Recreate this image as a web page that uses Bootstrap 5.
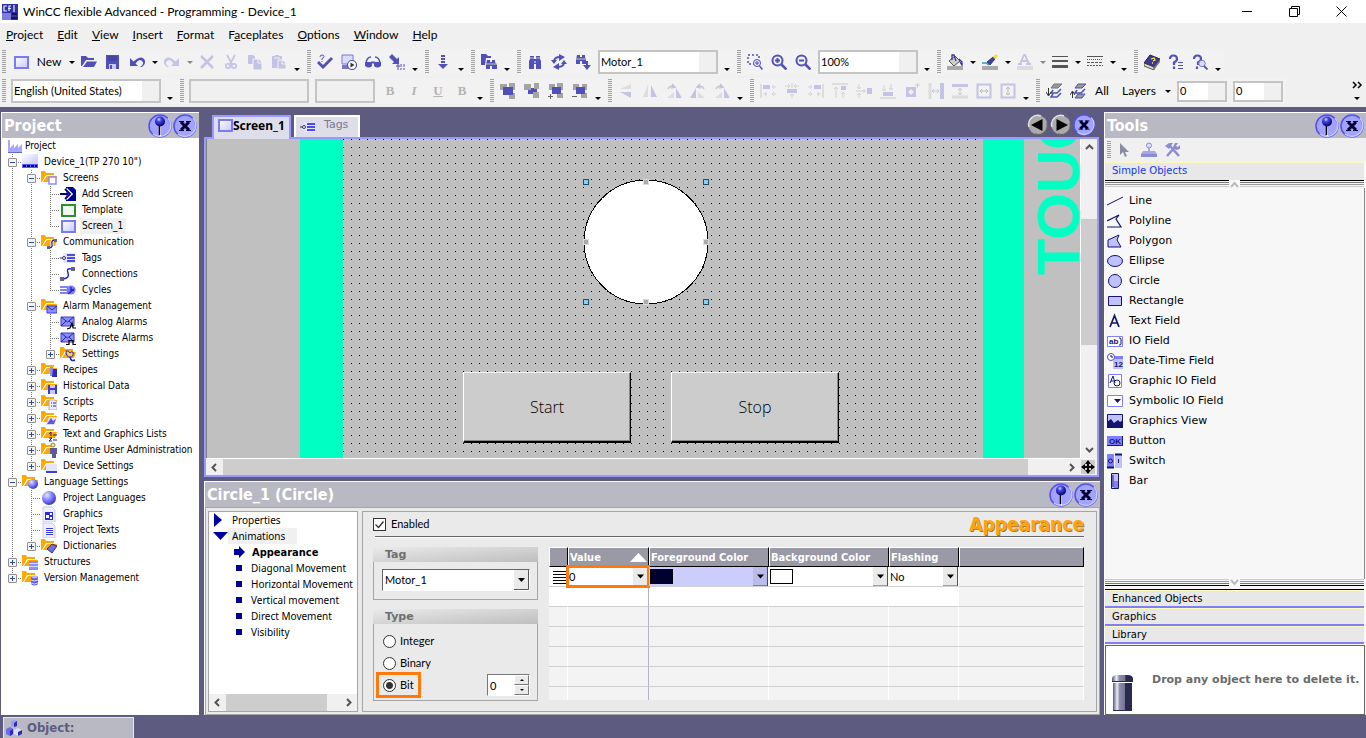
<!DOCTYPE html>
<html lang="en">
<head>
<meta charset="utf-8">
<meta name="viewport" content="width=device-width, initial-scale=1">
<title>WinCC flexible Advanced - Programming - Device_1</title>
<link href="https://cdn.jsdelivr.net/npm/bootstrap@5.3.0/dist/css/bootstrap.min.css" rel="stylesheet">
<style>
:root{--frame:#9999ff;--shell:#5d5c80}
body{font:12px/16px Lato,"Noto Sans",sans-serif;color:#000;background:var(--shell)}
button,select,input{font:inherit;color:inherit}
button{background:none;border:0;padding:0}
svg{display:block;flex:none}
a{color:inherit;text-decoration:none}
.i16{width:16px;height:16px}
/* window chrome */
.titlebar{height:23px;background:#fff}
.titlebar button{width:46px;height:23px;margin-right:1px}
.titlebar button:last-child{margin-right:2px}
.menubar{height:24px;background:#f0f0f0;gap:14px;padding-left:6px}
.toolbars{background:#f0f0f0;height:60px;padding-top:1px}
.toolrow{height:28px;margin-bottom:1px}
.toolset{height:26px;background:#f2f2f2}
.grip{width:10px;height:24px;background:repeating-linear-gradient(#a0a0a0 0 1px,transparent 1px 2px) 4px 0/4px 100% no-repeat}
.grip.edge{width:8px;background-position:2px 0}
.tb{width:24px;height:24px;display:flex;align-items:center;justify-content:center}
.tb.txt{width:auto}
.dd{width:11px;height:24px;display:flex;align-items:center;justify-content:center}
.ovf{width:12px;height:24px;display:flex;align-items:end;justify-content:center;padding-bottom:3px}
.dd::before,.ovf::before{content:"";border:3px solid transparent;border-top-color:#000;border-bottom:0}
.dd.off::before{border-top-color:#888}
.tsel{appearance:none;height:24px;margin:0 3px;border:2px solid #c4c4c4;border-radius:0;padding:0 1px;font-size:11px;background:linear-gradient(90deg,#fff calc(100% - 17px),#f0f0f0 0)}
.tsel:disabled{background:#f0f0f0;opacity:1}
.w120{width:120px}.w100{width:100px}.w150{width:150px}.w60{width:60px}.w50{width:50px;height:21px}
.fmt{font:bold 13px "Liberation Serif",serif;color:#b4b4b4}
/* docked panels */
.pane{border-top:1px solid #fff;border-left:1px solid #fff;min-height:0}
.pane-head{height:25px;background:#b9b9c3;color:#fff;font:bold 16px/25px "DejaVu Sans Condensed","DejaVu Sans",sans-serif;padding:0 2px;gap:1px}
.i24{width:24px;height:24px}
.left{width:198px;background:#fff;margin-left:1px}
.mid{margin:0 4px 0 5px;min-width:0}
.right{width:262px;background:#f7f7f7}
/* project tree */
.tree{font:10px/16px "DejaVu Sans Condensed","DejaVu Sans",sans-serif}
.tree ul,.tree{list-style:none;margin:0;padding:0}
.tree .rowline{display:flex;height:16px;padding-left:1px;white-space:nowrap}
.tree .lbl{padding:0 3px 0 2px;margin-left:4px}
.tree .lbl.on{background:#f0f0f0}
.c{width:19px;flex:none;display:flex;align-items:center;justify-content:center;
 --v:repeating-linear-gradient(#777 0 1px,transparent 1px 2px) 9px 0/1px 100% no-repeat;
 --h:repeating-linear-gradient(90deg,#777 0 1px,transparent 1px 2px) 9px 8px/10px 1px no-repeat}
.c.v{background:var(--v)}
.c.t{background:var(--v),var(--h)}
.c.e{background:repeating-linear-gradient(#777 0 1px,transparent 1px 2px) 9px 0/1px 8px no-repeat,var(--h)}
.c button{width:9px;height:9px;border:1px solid #909090;border-radius:1px;background:linear-gradient(#2c4a9c,#2c4a9c) 1px 3px/5px 1px no-repeat,#f4f4f4}
.c button.p{background:linear-gradient(#2c4a9c,#2c4a9c) 1px 3px/5px 1px no-repeat,linear-gradient(#2c4a9c,#2c4a9c) 3px 1px/1px 5px no-repeat,#f4f4f4}
/* screen editor */
.tabs{height:25px;padding-left:8px;padding-right:5px}
.tabs .tab{height:22px;border:2px solid #fff;border-bottom:0;background:#dedeea;color:#77778a;display:flex}
.tabs .tab.on{width:79px;height:24px;margin-bottom:-2px;border-color:var(--frame);color:#000;font:bold 12px/18px "Noto Sans",sans-serif;position:relative;padding-left:3px}
.tabs .tab.idle{width:66px;margin-left:3px;padding-left:4px;gap:8px;font:11px/16px "DejaVu Sans",sans-serif}
.editor{border:2px solid var(--frame);min-height:0;background:#f0f0f0;margin-right:1px}
.stage{position:relative;overflow:hidden;background:#c0c0c0;border-left:1px solid #808080;min-width:0}
.stage>*{position:absolute}
.strip{top:0;bottom:0;background:#00ffc3}
.touch{font:bold 60px/60px "Liberation Sans",sans-serif;color:#00ffc3;writing-mode:vertical-rl;transform:rotate(180deg)}
.hmi{width:168px;height:71px;background:#ccc;border:1px solid #fff;border-right-color:#000;border-bottom:2px solid #000;box-shadow:inset -1px -1px #888;font:300 16px "Open Sans","Noto Sans",sans-serif}
.knob{width:6px;height:6px;background:#aaa;border:1px solid #ddd}
.knob.k{background:#87cefa;border-color:#205060}
.vbar{width:17px;border-left:1px solid #fff}
.thumb{background:#cdcdcd}
.chev{width:9px;height:9px;fill:none;stroke:#555;stroke-width:2}
/* property view */
.props{height:234px;margin-top:4px;background:#eaeaea}
.prop-body{min-height:0;padding:3px 2px 2px 2px;gap:4px}
.boxed{border:1px solid #a5a5a5}
.nav-tree{width:150px;background:#fff;font:10px/16px "Noto Sans",sans-serif}
.nav-tree a{display:flex;height:16px;align-items:center;white-space:nowrap}
.bul{width:6px;height:6px;background:#000090;margin:0 9px 0 27px}
.form{font-size:11px}
.heading{font:bold 19px/22px "DejaVu Sans Condensed","DejaVu Sans",sans-serif;color:#ffa50a;text-shadow:1px 1px #8a7a50}
.rule{border-top:1px solid #666;border-bottom:1px solid #fff}
.group{width:165px;border:1px solid #a5a5a5;border-top:0}
.group legend{float:none;margin:0 -1px;width:165px;height:15px;font:bold 11px/15px "DejaVu Sans",sans-serif;color:#6e6e6e;padding-left:12px;background:linear-gradient(#eaeaea66,#b4b4b466),linear-gradient(90deg,#eaeaea,#c4c4c4)}
.pick{appearance:none;border:1px solid #666;border-right-color:#fff;border-bottom-color:#fff;border-radius:0;background:url("data:image/svg+xml,%3Csvg xmlns='http://www.w3.org/2000/svg' width='15' height='20'%3E%3Cpath d='M0 0h15v20H0z' fill='%23eaeaea'/%3E%3Cpath d='M14.500 0v19.500H0' fill='none' stroke='%23555'/%3E%3Cpath d='M4 8h7l-3.500 4z'/%3E%3C/svg%3E") right center no-repeat #fff;padding:0 2px;height:22px}
.mark-on{outline:3px solid #ff7a0a}
.check{appearance:none;width:13px;height:13px;border:1px solid #333;background:#fff;margin:0;flex:none}
.check[type=radio]{border-radius:50%}
.check[type=radio]:checked{background:radial-gradient(#333 0 3px,#fff 4px)}
.check[type=checkbox]:checked{background:url("data:image/svg+xml,%3Csvg xmlns='http://www.w3.org/2000/svg' viewBox='0 0 11 11'%3E%3Cpath d='M1.500 5.500l3 3 5-6' fill='none' stroke='%23333' stroke-width='1.400'/%3E%3C/svg%3E") #fff}
.num{appearance:textfield;width:26px;height:20px;border:0;padding:0 2px;background:#fff}
.num::-webkit-inner-spin-button{display:none}
.spin{border:1px solid #777;border-right-color:#fff;border-bottom-color:#fff;background:#fff}
.spin button{width:15px;height:10px;background:#eaeaea;border:1px solid #fff;border-right-color:#777;border-bottom-color:#777;display:flex;align-items:center;justify-content:center}
.up::before,.down::before{content:"";border:2px solid transparent}
.up::before{border-bottom-color:#000;border-top:0}
.down::before{border-top-color:#000;border-bottom:0}
.gridtab{table-layout:fixed;width:100%;border-collapse:separate;border-spacing:0}
.gridtab th{height:20px;padding:0 1px;background:#9a99a6;color:#fff;font:bold 11px/17px "DejaVu Sans Condensed","DejaVu Sans",sans-serif;border-right:1px solid #000;border-left:1px solid #fff;border-top:1px solid #fff;border-bottom:1px solid #000;white-space:nowrap}
.gridtab td{height:20px;padding:0;background:#f3f3f3;border-bottom:1px solid #d0d0d0;border-right:1px solid #fff}
.gridtab td:nth-child(2){border-right-color:#b4b4c4}
.gridtab .w td:not(:last-child){background:#fff}
.gridtab .short td{height:13px;border-bottom:0}
.gridtab .pick{display:block;width:100%;height:19px;border:0;padding:0 1px}
.gridtab .tint{background-color:#ccccff;background-blend-mode:multiply}
.sw{position:absolute;left:1px;top:2px;width:23px;height:15px;border:1px solid #000}
/* toolbox */
.acc{display:block;width:calc(100% - 2px);height:18px;text-align:left;padding-left:7px;background:#e8e8e8;border-top:1px solid #fbf8c0;border-bottom:2px solid #8080f4;font:10px/14px "DejaVu Sans",sans-serif}
.acc.current{color:#1438f0;border-bottom-color:#e8e8e8}
.hatch{height:8px;margin-right:2px;background:linear-gradient(#000 0 1px,transparent 0 2px,#777 0 3px,transparent 0 4px,#999 0 5px,transparent 0 6px,#ccc 0 7px,transparent 0)}
.hatch.rev{background:linear-gradient(#ccc 0 1px,transparent 0 2px,#999 0 3px,transparent 0 4px,#777 0 5px,transparent 0 6px,#000 0 7px,transparent 0)}
.hatch svg{background:#f7f7f7;width:11px;height:8px}
.objs{font:11px/20px "DejaVu Sans",sans-serif;border-right:1px solid #888;margin-right:1px;padding-top:3px}
.objs button{display:flex;align-items:center;height:20px;gap:6px;padding-left:2px;width:100%}
.objs text{font:bold 8px "Liberation Sans",sans-serif;fill:#14146e}
.bin{height:70px;border:1px solid #666;margin-right:1px;background:#fff;font:bold 11px/16px "DejaVu Sans",sans-serif;color:#6b6b6b}
.status{height:21px;width:131px;margin:2px 0 0 3px;border:1px solid #e8e8f0;border-bottom:0;background:#b9b9c3;color:#5d5c80;font:bold 13px/20px "DejaVu Sans Condensed","DejaVu Sans",sans-serif}
</style>
</head>
<body class="vh-100 d-flex flex-column overflow-hidden">

<svg width="0" height="0" class="position-absolute" aria-hidden="true">
<defs>
<radialGradient id="ball" cx=".4" cy=".3" r=".7"><stop offset="0" stop-color="#dde"/><stop offset=".3" stop-color="#4a4af0"/><stop offset="1" stop-color="#00005a"/></radialGradient>
<radialGradient id="globe" cx=".35" cy=".3" r=".8"><stop offset="0" stop-color="#e4e4ff"/><stop offset=".5" stop-color="#7a7aff"/><stop offset="1" stop-color="#2828b0"/></radialGradient>
<linearGradient id="glass" x2="1" y2="1"><stop offset="0" stop-color="#fff"/><stop offset="1" stop-color="#c6c6ff"/></linearGradient>
<linearGradient id="binfill"><stop offset="0" stop-color="#55557c"/><stop offset=".22" stop-color="#eeeef8"/><stop offset=".35" stop-color="#8c8ca8"/><stop offset=".6" stop-color="#77779a"/><stop offset=".66" stop-color="#2a2a50"/><stop offset="1" stop-color="#2a2a50"/></linearGradient>
</defs>
<symbol id="pin" viewBox="0 0 24 24"><circle cx="12" cy="12" r="11" fill="#a2a2ff" stroke="#5050f4" stroke-width="1.500"/><path d="M20 4a11 11 0 01-15 16" fill="none" stroke="#c8c8ff" stroke-width="1.500"/><path d="M12.500 11v11" stroke="#fff"/><path d="M11.500 11v10" stroke="#000" stroke-width="1.500"/><circle cx="12" cy="7.500" r="5" fill="url(#ball)"/></symbol>
<symbol id="shut" viewBox="0 0 24 24"><circle cx="12" cy="12" r="11" fill="#a2a2ff" stroke="#5050f4" stroke-width="1.500"/><path d="M20 4a11 11 0 01-15 16" fill="none" stroke="#c8c8ff" stroke-width="1.500"/><path d="M8 8l8 8M16 8l-8 8" stroke="#000030" stroke-width="3"/><path d="M6 7.500h5M13 7.500h5M6 16.500h5M13 16.500h5" stroke="#000030"/></symbol>
<symbol id="prev" viewBox="0 0 22 22"><circle cx="11" cy="11" r="9.500" fill="#aaa"/><path d="M2 13a9 9 0 0112-11" fill="none" stroke="#e4e4e4" stroke-width="1.500"/><path d="M20 9a9 9 0 01-12 11" fill="none" stroke="#666" stroke-width="1.500"/><path d="M15.500 5v12L4 11z"/></symbol>
<symbol id="next" viewBox="0 0 22 22"><circle cx="11" cy="11" r="9.500" fill="#aaa"/><path d="M2 13a9 9 0 0112-11" fill="none" stroke="#e4e4e4" stroke-width="1.500"/><path d="M20 9a9 9 0 01-12 11" fill="none" stroke="#666" stroke-width="1.500"/><path d="M6.500 5v12L18 11z"/></symbol>
<symbol id="scr" viewBox="0 0 16 16"><path d="M2 3h13v11H2z" fill="url(#glass)" stroke="#7a7af4" stroke-width="2"/></symbol>
<symbol id="open" viewBox="0 0 16 16"><path d="M0 2h5l2 2h6v2H5L1 12H0z" fill="#5050b8"/><path d="M6 7.500h10L13 13H2z" fill="#5050b8"/></symbol>
<symbol id="save" viewBox="0 0 16 16"><path d="M1 1h13v14H1z" fill="#5050b8"/><path d="M3 2h9v5H3z" fill="#4545a4"/><path d="M4 10h7v5H4z" fill="#c8c8f0"/><path d="M5 11h2v4H5z" fill="#5050b8"/></symbol>
<symbol id="undo" viewBox="0 0 16 16"><path d="M1 4v8h8L6.500 9.500Q10 4 13 7t-2 6h2q5-4 2-8T4.500 7.500z" fill="#5050b8"/></symbol>
<symbol id="redo" viewBox="0 0 16 16"><path d="M15 4v8H7l2.500-2.500Q6 4 3 7t2 6H3q-5-4-2-8t10.500 2.500z" fill="#c3c3e6"/></symbol>
<symbol id="del" viewBox="0 0 16 16"><path d="M2 2l12 12M14 2L2 14" stroke="#c3c3e6" stroke-width="2.500"/></symbol>
<symbol id="cut" viewBox="0 0 16 16"><g fill="none" stroke="#c3c3e6" stroke-width="1.700"><path d="M4 1l5 9M12 1L7 10"/><circle cx="5" cy="12" r="2.200"/><circle cx="11" cy="12" r="2.200"/></g></symbol>
<symbol id="copy" viewBox="0 0 16 16"><path d="M1 1h5l2 2v7H1z" fill="#c3c3e6"/><path d="M6 5h6l3 3v8H6z" fill="#c3c3e6" stroke="#f2f2f2"/><path d="M11 5v4h4" fill="none" stroke="#f2f2f2"/></symbol>
<symbol id="paste" viewBox="0 0 16 16"><path d="M1 2h3V1h4v1h3v12H1z" fill="#c3c3e6"/><path d="M3 4h6" stroke="#f2f2f2"/><path d="M7 6h5l3 3v6H7z" fill="#c3c3e6" stroke="#f2f2f2"/><path d="M11 6v4h4" fill="none" stroke="#f2f2f2"/></symbol>
<symbol id="check" viewBox="0 0 16 16"><path d="M0 9l2-2 4 4 8-8 2 2L6 15z" fill="#5050b8"/><path d="M3 3q0-2 2-2t2 1.500-2 2V6M5 7v1" fill="none" stroke="#5050b8"/></symbol>
<symbol id="comp" viewBox="0 0 16 16"><path d="M1 1h11v9H1z" fill="#dcdcff" stroke="#7777dd"/><path d="M1 12h8M1 14h8" stroke="#5050b8" stroke-width="1.500"/><circle cx="11" cy="11" r="4.500" fill="#fff" stroke="#5050b8" stroke-width="1.200"/><path d="M9.500 8.500v5l4-2.500z" fill="#333"/></symbol>
<symbol id="specs" viewBox="0 0 16 16"><path d="M1 9q1-6 5-6M15 9q-1-6-5-6" fill="none" stroke="#5050b8" stroke-width="1.500"/><path d="M0 8h7v4q-3 3-7 0zM9 8h7v4q-4 3-7 0z" fill="#5050b8"/><path d="M6 8.500h4" stroke="#5050b8" stroke-width="2"/></symbol>
<symbol id="xfer" viewBox="0 0 16 16"><path d="M0 3l3-3 5 5 2-2v7H3l2-2z" fill="#5050b8"/><path d="M8 11h2v2H8zM12 10v3M15 10v3M8 15h2M12 14v2M14 15h2" fill="none" stroke="#5050b8"/></symbol>
<symbol id="down" viewBox="0 0 16 16"><path d="M6 2h4M6 5h4M6 8h4" stroke="#5050b8" stroke-width="2"/><path d="M3 10h10l-5 5z" fill="#5050b8"/></symbol>
<symbol id="bino" viewBox="0 0 16 16"><path d="M3 2h4v3h2V2h4v3l1 2v8H9v-5H7v5H2V7l1-2z" fill="#5050b8"/><path d="M3 4h4M9 4h4" stroke="#c8c8a8"/><path d="M7 7h2v2H7z" fill="#9c9ce8"/></symbol>
<symbol id="bfold" viewBox="0 0 16 16"><path d="M0 0h5l2 2h3v2H5l-1 7H0z" fill="#5050b8"/><path d="M6 6h3v2h2V6h3v2l2 3v4h-5v-3H9v3H5v-4z" fill="#5050b8"/><path d="M5 10h11" stroke="#c8c8a8"/></symbol>
<symbol id="bdown" viewBox="0 0 16 16"><path d="M2 1h3v2h2V1h3v2l1 3v4H7V7H5v3H1V6z" fill="#5050b8"/><path d="M1 5h10" stroke="#c8c8a8"/><path d="M11 7h2v4h3l-4 5-4-5h3z" fill="#5050b8"/></symbol>
<symbol id="sync" viewBox="0 0 16 16"><path d="M3 8q0-5 6-5M13 8q0 5-6 5" fill="none" stroke="#5050b8" stroke-width="1.800"/><path d="M8 0l6 3-6 4zM8 9v7l-6-3z" fill="#5050b8"/><path d="M0 6h6l-3 4zM10 10h6l-3-4z" fill="#5050b8"/></symbol>
<symbol id="zsel" viewBox="0 0 16 16"><path d="M1 1h11v9H1z" fill="none" stroke="#5050b8" stroke-width="1.500" stroke-dasharray="2 2"/><circle cx="10" cy="9" r="3.500" fill="#e8e8ff" stroke="#5050b8"/><path d="M8 9h4M10 7v4" stroke="#5050b8"/><path d="M12.500 12l3 3.500" stroke="#5050b8" stroke-width="1.500"/></symbol>
<symbol id="zin" viewBox="0 0 16 16"><circle cx="6.500" cy="6.500" r="5" fill="#f2f2f2" stroke="#5050b8" stroke-width="2"/><path d="M4 6.500h5M6.500 4v5" stroke="#5050b8" stroke-width="2"/><path d="M10.500 10.500l5 5" stroke="#5050b8" stroke-width="2.500"/></symbol>
<symbol id="zout" viewBox="0 0 16 16"><circle cx="6.500" cy="6.500" r="5" fill="#f2f2f2" stroke="#5050b8" stroke-width="2"/><path d="M4 6.500h5" stroke="#5050b8" stroke-width="2"/><path d="M10.500 10.500l5 5" stroke="#5050b8" stroke-width="2.500"/></symbol>
<symbol id="fill" viewBox="0 0 16 16"><path d="M2 7l6-5 5 5-6 5z" fill="#ccc" stroke="#555"/><path d="M5 6V1h2l2 6M12 5l3 3v3l-2-3" fill="none" stroke="#33339a" stroke-width="1.300"/><path d="M0 12h16v4H0z" fill="#a9a9a9"/></symbol>
<symbol id="pen" viewBox="0 0 16 16"><path d="M5 8l3 3 5-6-2-2z" fill="#4040a8" stroke="#222" stroke-width=".7"/><path d="M11 3l3-3 2 2-3 3z" fill="#f4e020"/><path d="M0 9h4l3 2" fill="none" stroke="#28a0c0" stroke-width="1.500"/><path d="M0 12h16v4H0z" fill="#a9a9a9"/></symbol>
<symbol id="fcol" viewBox="0 0 16 16"><path d="M3 10L7 1h1l4 9M4 7h6M1 10h4M9 10h5" fill="none" stroke="#c3c3e6" stroke-width="1.800"/><path d="M0 12h16v4H0z" fill="#dcdcdc"/></symbol>
<symbol id="lw" viewBox="0 0 16 16"><path d="M0 2.500h16" stroke="#555"/><path d="M0 6h16v2H0zM0 11h16v3H0z" fill="#555"/></symbol>
<symbol id="ls" viewBox="0 0 16 16"><path d="M0 2.500h16" stroke="#555"/><path d="M0 5.500h16" stroke="#555" stroke-dasharray="1 1"/><path d="M0 8.500h16" stroke="#555" stroke-dasharray="3 1"/><path d="M0 11.500h16" stroke="#555" stroke-dasharray="2 1"/></symbol>
<symbol id="book" viewBox="0 0 16 16"><path d="M0 9l6-8 10 4-6 8z" fill="#3a3a9c" stroke="#223"/><path d="M0 9l10 4v3L0 12z" fill="#dcdcb8" stroke="#333" stroke-width=".8"/><path d="M10 13l6-8v3l-6 8z" fill="#777"/><path d="M7 5l3-1 1 2-2 1M8 9h1" fill="none" stroke="#ffe648" stroke-width="1.300"/></symbol>
<symbol id="hlp" viewBox="0 0 16 16"><path d="M2 5q0-3.500 3.500-3.500T9 5q0 2-3 3.500V11M6 12.500v2.500" fill="none" stroke="#5050b8" stroke-width="2.200"/><path d="M10 8.500h5M10 11.500h5M10 14.500h5" stroke="#5050b8"/></symbol>
<symbol id="hlps" viewBox="0 0 16 16"><path d="M2 5q0-3.500 3.500-3.500T9 5q0 2-3 3.500V11M5 12.500v2.500" fill="none" stroke="#5050b8" stroke-width="2.200"/><circle cx="10" cy="9.500" r="3.200" fill="#dcdcff" stroke="#7a7ac8"/><path d="M12 12l3.500 3.500" stroke="#5050b8" stroke-width="1.800"/></symbol>
<symbol id="ar1" viewBox="0 0 16 16"><path d="M0 1h7v6H0zM9 0h6v7H9zM9 10h6v6H9z" fill="#a4a4a4"/><path d="M3 4h10v8H3z" fill="#5050b8"/></symbol>
<symbol id="ar2" viewBox="0 0 16 16"><path d="M4 5h9v6H4z" fill="#5050b8"/><path d="M0 1h7v6H0zM10 0h5v6h-5zM9 9h6v6H9z" fill="#a4a4a4"/></symbol>
<symbol id="ar3" viewBox="0 0 16 16"><path d="M1 1h6v6H1zM9 0h6v7H9zM9 10h6v5H9z" fill="#a4a4a4"/><path d="M4 4h9v7H4z" fill="#5050b8"/><path d="M0 13.500h5M2.500 11v5" stroke="#666"/></symbol>
<symbol id="ar4" viewBox="0 0 16 16"><path d="M1 1h6v6H1zM10 1h5v6h-5zM9 10h6v5H9z" fill="#a4a4a4"/><path d="M4 4h9v7H4z" fill="#5050b8"/><path d="M0 13.500h5" stroke="#666"/></symbol>
<symbol id="fl1" viewBox="0 0 16 16"><path d="M13 1v5H2z" fill="#ddd"/><path d="M2 9h11v6z" fill="#c3c3e6"/></symbol>
<symbol id="fl2" viewBox="0 0 16 16"><path d="M6 2v12H1z" fill="#ddd"/><path d="M9 2v12h6z" fill="#c3c3e6"/></symbol>
<symbol id="fl3" viewBox="0 0 16 16"><path d="M8 9v6H1z" fill="#ddd"/><path d="M10 5v10h6z" fill="#c3c3e6"/><path d="M2 6q2-4 6-2M6 1l3 3-4 1" fill="none" stroke="#c4c4d4" stroke-width="1.500"/></symbol>
<symbol id="fl4" viewBox="0 0 16 16"><path d="M8 9v6h7z" fill="#ddd"/><path d="M6 5v10H0z" fill="#c3c3e6"/><path d="M14 6q-2-4-6-2M10 1L7 4l4 1" fill="none" stroke="#c4c4d4" stroke-width="1.500"/></symbol>
<symbol id="al1" viewBox="0 0 16 16"><path d="M1 1v14" stroke="#ddd" stroke-width="2"/><path d="M3 2h7v4H3z" fill="#c3c3e6"/><path d="M16 4h-4m0 0l2-2m-2 2l2 2M3 11h4m0 0L5 9m2 2l-2 2M16 11h-4m0 0l2-2m-2 2l2 2" fill="none" stroke="#d2d2d2"/></symbol>
<symbol id="al2" viewBox="0 0 16 16"><path d="M3 6h10v4H3z" fill="#c3c3e6"/><path d="M1 3h5m0 0L4 1m2 2L4 5M15 3h-5m0 0l2-2m-2 2l2 2M8 0v5M8 15v-4m-2 2l2-2 2 2" fill="none" stroke="#d2d2d2"/></symbol>
<symbol id="al3" viewBox="0 0 16 16"><path d="M15 1v14" stroke="#ddd" stroke-width="2"/><path d="M6 2h7v4H6z" fill="#c3c3e6"/><path d="M0 4h4m0 0L2 2m2 2L2 6M0 11h4m0 0L2 9m2 2l-2 2M13 11H9m0 0l2-2m-2 2l2 2" fill="none" stroke="#d2d2d2"/></symbol>
<symbol id="al4" viewBox="0 0 16 16"><path d="M0 1h16" stroke="#ddd" stroke-width="2"/><path d="M9 3h5v4H9z" fill="#c3c3e6"/><path d="M4 15V4m-2 2l2-2 2 2M11 15V9m-2 2l2-2 2 2" fill="none" stroke="#d2d2d2"/></symbol>
<symbol id="al5" viewBox="0 0 16 16"><path d="M11 5h5v6h-5z" fill="#c3c3e6"/><path d="M3 1v5M1 4l2 2 2-2M3 15v-5m-2 2l2-2 2 2M0 8h10M8 6v4" fill="none" stroke="#d2d2d2"/></symbol>
<symbol id="al6" viewBox="0 0 16 16"><path d="M0 15h16" stroke="#ddd" stroke-width="2"/><path d="M3 9h10v4H3z" fill="#c3c3e6"/><path d="M4 2v6M2 6l2 2 2-2M11 1v6M9 5l2 2 2-2" fill="none" stroke="#d2d2d2"/></symbol>
<symbol id="al7" viewBox="0 0 16 16"><path d="M2 4h10v10H2z" fill="#c3c3e6"/><path d="M7 6l3 3-3 3-3-3z" fill="#eee"/><path d="M11 2h5M13.500 0v5" stroke="#ccc"/></symbol>
<symbol id="al8" viewBox="0 0 16 16"><path d="M2 0v16" stroke="#ddd" stroke-width="3"/><path d="M12 0h4v16h-4z" fill="#c3c3e6"/><path d="M4 8h7M6 6L4 8l2 2M9 6l2 2-2 2" fill="none" stroke="#c8c8c8"/></symbol>
<symbol id="al9" viewBox="0 0 16 16"><path d="M0 1h16v3H0z" fill="#c3c3e6"/><path d="M0 14h16" stroke="#ddd" stroke-width="3"/><path d="M8 5v7M6 7l2-2 2 2M6 10l2 2 2-2" fill="none" stroke="#c8c8c8"/></symbol>
<symbol id="al10" viewBox="0 0 16 16"><path d="M1.500 1.500h13v13h-13z" fill="none" stroke="#c3c3e6" stroke-width="2"/><path d="M4 8h8M6 6L4 8l2 2M10 6l2 2-2 2" fill="none" stroke="#bbb"/></symbol>
<symbol id="al11" viewBox="0 0 16 16"><path d="M1.500 1.500h13v13h-13z" fill="none" stroke="#c3c3e6" stroke-width="2"/><path d="M8 4v8M6 6l2-2 2 2M6 10l2 2 2-2" fill="none" stroke="#bbb"/></symbol>
<symbol id="ly1" viewBox="0 0 16 16"><path d="M8 1h8l-4 4H5z" fill="#999" stroke="#777"/><path d="M15 6l-4 4H5l2-3M15 10l-4 4H5l2-3" fill="none" stroke="#5050b8" stroke-width="1.500"/><path d="M2.500 5v7M0 9l2.500 4L5 9" fill="none" stroke="#333"/></symbol>
<symbol id="ly2" viewBox="0 0 16 16"><path d="M8 1h8l-4 4H5zM8 11h7l-3 4H5z" fill="#999" stroke="#5050b8"/><path d="M15 6l-4 4H5l2-3" fill="none" stroke="#5050b8" stroke-width="1.500"/><path d="M2.500 15V9M0 12l2.500-4L5 12" fill="none" stroke="#333"/></symbol>
<!-- tree icons -->
<symbol id="fold" viewBox="0 0 16 16"><path d="M0 1h4l1 2h8v2H5L1 12H0z" fill="#ffa800"/><path d="M6 6h10l-2 6H2z" fill="#ffa800"/></symbol>
<symbol id="proj" viewBox="0 0 16 16"><path d="M1 15V2h2v8l4-4v4l4-4v4l4-4v9z" fill="#a8a8ff"/><path d="M1 14.500h14" stroke="#6464d8"/></symbol>
<symbol id="dev" viewBox="0 0 16 16"><path d="M0 0h16v10H0z" fill="url(#glass)"/><path d="M0 10h16v4H0z" fill="#5a5aff"/><path d="M1 12h3M5 12h3M9 12h3M13 12h2" stroke="#000070" stroke-width="2"/></symbol>
<symbol id="addscr" viewBox="0 0 16 16"><path d="M6 1h7l3 3v11H6z" fill="#000090"/><path d="M0 8h8M6 3l5 5-5 5" fill="none" stroke="#fff" stroke-width="3"/><path d="M0 8h8M5 3l5 5-5 5" fill="none" stroke="#000090" stroke-width="1.800"/></symbol>
<symbol id="tmpl" viewBox="0 0 16 16"><path d="M2 3h13v11H2z" fill="#eef8ee" stroke="#2f8f2f" stroke-width="2"/></symbol>
<symbol id="tagi" viewBox="0 0 16 16"><path d="M4 3h11v10H4L2 8z" fill="#e4e4ff"/><path d="M7 5h8M7 8h8M7 11h8" stroke="#1a1ae0" stroke-width="1.500"/><circle cx="4" cy="8" r="1.500" fill="#fff" stroke="#335"/><path d="M0 8h2.500" stroke="#335"/></symbol>
<symbol id="conn" viewBox="0 0 16 16"><path d="M11 3Q6 2 8 7t-5 6" fill="none" stroke="#2424d8" stroke-width="1.500"/><path d="M11 1h4v4h-4zM0 11h4v4H0z" fill="#667"/></symbol>
<symbol id="cyc" viewBox="0 0 16 16"><path d="M0 5h8M0 8h8M0 11h8" stroke="#5a5af0" stroke-width="1.500"/><circle cx="11" cy="8" r="4.500" fill="#7a7aff"/><path d="M11 5v3h3M8 12l6-5" fill="none" stroke="#2020c0" stroke-width="1.300"/></symbol>
<symbol id="mail" viewBox="0 0 16 16"><path d="M1 3h13v9H1z" fill="#8c8cff" stroke="#3c3cd0"/><path d="M1 3l6.500 5L14 3M1 12l5-5M14 12L9 7" fill="none" stroke="#2a2aa0"/></symbol>
<symbol id="maila" viewBox="0 0 16 16"><use href="#mail"/><path d="M7 15l3-1 2-5 1 5h3" fill="none" stroke="#000" stroke-width="1.200"/></symbol>
<symbol id="maild" viewBox="0 0 16 16"><use href="#mail"/><path d="M6 14.500h3v-4h4v4h3" fill="none" stroke="#000" stroke-width="1.200"/></symbol>
<symbol id="o-scr" viewBox="0 0 16 16"><use href="#fold"/><path d="M8 7h7v7H8z" fill="#fff" stroke="#8c8cff" stroke-width="1.500"/></symbol>
<symbol id="o-com" viewBox="0 0 16 16"><use href="#fold"/><path d="M14 6q-4 0-3 4t-4 4" fill="none" stroke="#fff" stroke-width="3"/><path d="M14 6q-4 0-3 4t-4 4" fill="none" stroke="#2020d0" stroke-width="1.300"/><path d="M13 5h3v3h-3zM6 12h3v3H6z" fill="#667"/></symbol>
<symbol id="o-mail" viewBox="0 0 16 16"><use href="#fold"/><path d="M6 8h10v7H6z" fill="#8c8cff" stroke="#3c3cd0"/><path d="M6 8l5 4 5-4" fill="none" stroke="#2a2aa0"/></symbol>
<symbol id="o-set" viewBox="0 0 16 16"><use href="#fold"/><path d="M6 5q0 6 4 6t3-5q-3-1-3 1-1-3-4-2z" fill="#ffc850" stroke="#2020c0"/><path d="M10 11q1 5 5 3" fill="none" stroke="#2020c0" stroke-width="1.500"/></symbol>
<symbol id="o-rec" viewBox="0 0 16 16"><use href="#fold"/><path d="M9 5h3v9H9z" fill="#8c8cff"/><path d="M12 7h4v8h-5z" fill="#2c2cc0"/></symbol>
<symbol id="o-his" viewBox="0 0 16 16"><use href="#fold"/><path d="M7 7h9v9H7z" fill="#3c3cd0"/><path d="M9 7h5v3H9zM9 12h5v4H9z" fill="#c8c8ff"/></symbol>
<symbol id="o-scp" viewBox="0 0 16 16"><use href="#fold"/><path d="M8 6h6l2 2v8H8z" fill="#eeeeff" stroke="#aab"/><path d="M10 9h1M10 12h1M12 9h3M12 12h3" stroke="#2020c0"/></symbol>
<symbol id="o-rep" viewBox="0 0 16 16"><use href="#fold"/><path d="M8 7h8l-3 8H5z" fill="#dcdcff"/><path d="M6 14l4-6 2 3 3-2-2 5z" fill="#5a5ae0"/></symbol>
<symbol id="o-txt" viewBox="0 0 16 16"><use href="#fold"/><path d="M8 8l2-2v4M8 12h3l-3 3h3M12 9h4M12 14h4" fill="none" stroke="#1a1a90"/></symbol>
<symbol id="o-usr" viewBox="0 0 16 16"><use href="#fold"/><circle cx="12" cy="3" r="2" fill="#ffe0a0" stroke="#885"/><path d="M9 6h7v6h-1v4h-4v-4H9z" fill="#5a5a9c"/></symbol>
<symbol id="o-dev" viewBox="0 0 16 16"><use href="#fold"/><path d="M5 6h11v7H5z" fill="#e4e4ff"/><path d="M5 14h11" stroke="#3c3ce0" stroke-width="2"/></symbol>
<symbol id="o-glb" viewBox="0 0 16 16"><use href="#fold"/><circle cx="11" cy="10" r="5" fill="url(#globe)"/></symbol>
<symbol id="glb" viewBox="0 0 16 16"><circle cx="8" cy="8" r="7" fill="url(#globe)"/></symbol>
<symbol id="gfx" viewBox="0 0 16 16"><path d="M2 1h9l3 3v12H2z" fill="#eeeeff" stroke="#ccd"/><path d="M4 6h8v8H4z" fill="#2c2ce0"/><path d="M5 9h3v3H5zM9 7h2v2H9zM9 11h2v2H9z" fill="#fff"/></symbol>
<symbol id="ptx" viewBox="0 0 16 16"><path d="M2 1h9l3 3v12H2z" fill="#eeeeff" stroke="#ccd"/><path d="M5 6.500h7M5 8.500h7M5 10.500h7M5 12.500h7" stroke="#3c3ce0"/></symbol>
<symbol id="o-dic" viewBox="0 0 16 16"><use href="#fold"/><path d="M6 11l5-5 5 2-5 7z" fill="#7070d8" stroke="#333380"/></symbol>
<symbol id="o-str" viewBox="0 0 16 16"><use href="#fold"/><path d="M7 7h9v9H7z" fill="#8c8cff"/><path d="M7 9.500h9M7 12.500h9" stroke="#dcdcff"/></symbol>
<symbol id="o-ver" viewBox="0 0 16 16"><use href="#fold"/><ellipse cx="12.500" cy="7" rx="3.500" ry="1.500" fill="#b4b4ff"/><path d="M9 7v7q3.500 3 7 0V7q-3.500 3-7 0z" fill="#5a5af0"/><path d="M9 10q3.500 2 7 0M9 13q3.500 2 7 0" fill="none" stroke="#dcdcff"/></symbol>
<symbol id="chu" viewBox="0 0 9 9"><path d="M1 6l3.500-3.500L8 6"/></symbol>
<symbol id="chd" viewBox="0 0 9 9"><path d="M1 3l3.500 3.500L8 3"/></symbol>
<symbol id="chl" viewBox="0 0 9 9"><path d="M6 1L2.500 4.500 6 8"/></symbol>
<symbol id="chr" viewBox="0 0 9 9"><path d="M3 1l3.500 3.500L3 8"/></symbol>
</svg>

<header>
  <div class="titlebar d-flex align-items-center">
    <svg class="i16" viewBox="0 0 16 16" style="margin:0 5px 0 2px"><path d="M0 0h16v16H0z" fill="#3030a0"/><path d="M0 9h9v7H0z" fill="#7c7ce0"/><path d="M10 9h5v2h-5zM9 13h6v2H9z" fill="#14145c"/><path d="M5 2H2v5h3M9 2H7v5M6 4.500h3M12 1v7" fill="none" stroke="#e8e8ff" stroke-width="1.200"/></svg>
    <span class="flex-fill">WinCC flexible Advanced - Programming - Device_1</span>
    <button aria-label="Minimize"><svg width="11" height="11" class="mx-auto"><path d="M0 5.500h10" stroke="#000"/></svg></button>
    <button aria-label="Restore"><svg width="11" height="11" class="mx-auto"><path d="M.5 2.500h8v8h-8zM2.500 2V.5h8v8H9" fill="none" stroke="#000"/></svg></button>
    <button aria-label="Close"><svg width="11" height="11" class="mx-auto"><path d="M.5.5l10 10M10.500.5l-10 10" stroke="#000"/></svg></button>
  </div>
  <nav class="menubar d-flex align-items-center">
    <a href="#"><u>P</u>roject</a><a href="#"><u>E</u>dit</a><a href="#"><u>V</u>iew</a><a href="#"><u>I</u>nsert</a><a href="#"><u>F</u>ormat</a><a href="#">F<u>a</u>ceplates</a><a href="#"><u>O</u>ptions</a><a href="#"><u>W</u>indow</a><a href="#"><u>H</u>elp</a>
  </nav>
  <div class="toolbars">
    <div class="toolrow d-flex align-items-center">
      <div class="toolset d-flex align-items-center"><i class="grip edge"></i>
        <button class="tb" style="width:58px"><svg class="i16"><use href="#scr"/></svg><span class="ms-2">New</span></button><button class="dd" aria-label="New options"></button>
        <button class="tb" aria-label="Open"><svg class="i16"><use href="#open"/></svg></button>
        <button class="tb" aria-label="Save"><svg class="i16"><use href="#save"/></svg></button>
        <button class="tb" aria-label="Undo"><svg class="i16"><use href="#undo"/></svg></button><button class="dd" aria-label="Undo list"></button>
        <button class="tb" aria-label="Redo"><svg class="i16"><use href="#redo"/></svg></button><button class="dd off" aria-label="Redo list"></button>
        <button class="tb" aria-label="Delete"><svg class="i16"><use href="#del"/></svg></button>
        <button class="tb" aria-label="Cut"><svg class="i16"><use href="#cut"/></svg></button>
        <button class="tb" aria-label="Copy"><svg class="i16"><use href="#copy"/></svg></button>
        <button class="tb" aria-label="Paste"><svg class="i16"><use href="#paste"/></svg></button><button class="ovf" aria-label="More"></button></div>
      <div class="toolset d-flex align-items-center"><i class="grip"></i>
        <button class="tb" aria-label="Check"><svg class="i16"><use href="#check"/></svg></button>
        <button class="tb" aria-label="Start runtime"><svg class="i16"><use href="#comp"/></svg></button>
        <button class="tb" aria-label="Simulate"><svg class="i16"><use href="#specs"/></svg></button>
        <button class="tb" aria-label="Transfer"><svg class="i16"><use href="#xfer"/></svg></button><button class="ovf" aria-label="More"></button></div>
      <div class="toolset d-flex align-items-center"><i class="grip"></i>
        <button class="tb" aria-label="Download"><svg class="i16"><use href="#down"/></svg></button><button class="ovf" aria-label="More"></button></div>
      <div class="toolset d-flex align-items-center"><i class="grip"></i>
        <button class="tb" aria-label="Find in project"><svg class="i16"><use href="#bfold"/></svg></button><button class="ovf" aria-label="More"></button></div>
      <div class="toolset d-flex align-items-center"><i class="grip"></i>
        <button class="tb" aria-label="Find"><svg class="i16"><use href="#bino"/></svg></button>
        <button class="tb" aria-label="Replace"><svg class="i16"><use href="#sync"/></svg></button>
        <button class="tb" aria-label="Find next"><svg class="i16"><use href="#bdown"/></svg></button>
        <select class="tsel w120" aria-label="Search text"><option>Motor_1</option></select><button class="ovf" aria-label="More"></button></div>
      <div class="toolset d-flex align-items-center"><i class="grip"></i>
        <button class="tb" aria-label="Zoom area"><svg class="i16"><use href="#zsel"/></svg></button>
        <button class="tb" aria-label="Zoom in"><svg class="i16"><use href="#zin"/></svg></button>
        <button class="tb" aria-label="Zoom out"><svg class="i16"><use href="#zout"/></svg></button>
        <select class="tsel w100" aria-label="Zoom factor"><option>100%</option></select><button class="ovf" aria-label="More"></button></div>
      <div class="toolset d-flex align-items-center"><i class="grip"></i>
        <button class="tb" aria-label="Fill colour"><svg class="i16"><use href="#fill"/></svg></button><button class="dd" aria-label="Fill colours"></button>
        <button class="tb" aria-label="Line colour"><svg class="i16"><use href="#pen"/></svg></button><button class="dd" aria-label="Line colours"></button>
        <button class="tb" aria-label="Font colour"><svg class="i16"><use href="#fcol"/></svg></button><button class="dd off" aria-label="Font colours"></button>
        <button class="tb" aria-label="Line width"><svg class="i16"><use href="#lw"/></svg></button><button class="dd" aria-label="Line widths"></button>
        <button class="tb" aria-label="Line style"><svg class="i16"><use href="#ls"/></svg></button><button class="dd" aria-label="Line styles"></button><button class="ovf" aria-label="More"></button></div>
      <div class="toolset d-flex align-items-center"><i class="grip"></i>
        <button class="tb" aria-label="Manual"><svg class="i16"><use href="#book"/></svg></button>
        <button class="tb" aria-label="Help topics"><svg class="i16"><use href="#hlp"/></svg></button>
        <button class="tb" aria-label="Search help"><svg class="i16"><use href="#hlps"/></svg></button><button class="ovf" aria-label="More"></button></div>
    </div>
    <div class="toolrow d-flex align-items-center">
      <div class="toolset d-flex align-items-center"><i class="grip edge"></i>
        <select class="tsel w150" aria-label="Language"><option>English (United States)</option></select><button class="ovf" aria-label="More"></button></div>
      <div class="toolset d-flex align-items-center"><i class="grip"></i>
        <select class="tsel w120" disabled aria-label="Font"></select><select class="tsel w60" disabled aria-label="Font size"></select>
        <button class="tb fmt">B</button><button class="tb fmt fst-italic">I</button><button class="tb fmt text-decoration-underline">U</button><button class="tb fmt" aria-label="Flashing">B</button><button class="ovf" aria-label="More"></button></div>
      <div class="toolset d-flex align-items-center"><i class="grip"></i>
        <button class="tb" aria-label="Bring to front"><svg class="i16"><use href="#ar1"/></svg></button>
        <button class="tb" aria-label="Send to back"><svg class="i16"><use href="#ar2"/></svg></button>
        <button class="tb" aria-label="Bring forward"><svg class="i16"><use href="#ar3"/></svg></button>
        <button class="tb" aria-label="Send backward"><svg class="i16"><use href="#ar4"/></svg></button><button class="ovf" aria-label="More"></button></div>
      <div class="toolset d-flex align-items-center"><i class="grip"></i>
        <button class="tb" aria-label="Flip vertical"><svg class="i16"><use href="#fl1"/></svg></button>
        <button class="tb" aria-label="Flip horizontal"><svg class="i16"><use href="#fl2"/></svg></button>
        <button class="tb" aria-label="Rotate right"><svg class="i16"><use href="#fl3"/></svg></button>
        <button class="tb" aria-label="Rotate left"><svg class="i16"><use href="#fl4"/></svg></button>
        <button class="tb" aria-label="Rotate 180"><svg class="i16"><use href="#fl3"/></svg></button><button class="ovf" aria-label="More"></button></div>
      <div class="toolset d-flex align-items-center"><i class="grip"></i>
        <button class="tb" aria-label="Align left"><svg class="i16"><use href="#al1"/></svg></button>
        <button class="tb" aria-label="Centre horizontally"><svg class="i16"><use href="#al2"/></svg></button>
        <button class="tb" aria-label="Align right"><svg class="i16"><use href="#al3"/></svg></button>
        <button class="tb" aria-label="Align top"><svg class="i16"><use href="#al4"/></svg></button>
        <button class="tb" aria-label="Centre vertically"><svg class="i16"><use href="#al5"/></svg></button>
        <button class="tb" aria-label="Align bottom"><svg class="i16"><use href="#al6"/></svg></button>
        <button class="tb" aria-label="Centre in screen"><svg class="i16"><use href="#al7"/></svg></button>
        <button class="tb" aria-label="Space horizontally"><svg class="i16"><use href="#al8"/></svg></button>
        <button class="tb" aria-label="Space vertically"><svg class="i16"><use href="#al9"/></svg></button>
        <button class="tb" aria-label="Same width"><svg class="i16"><use href="#al10"/></svg></button>
        <button class="tb" aria-label="Same height"><svg class="i16"><use href="#al11"/></svg></button><button class="ovf" aria-label="More"></button></div>
      <div class="toolset d-flex align-items-center"><i class="grip"></i>
        <button class="tb" aria-label="Layer down"><svg class="i16"><use href="#ly1"/></svg></button>
        <button class="tb" aria-label="Layer up"><svg class="i16"><use href="#ly2"/></svg></button>
        <button class="tb">All</button><button class="tb txt ps-2">Layers</button><button class="ovf align-items-center pb-0" style="margin-left:6px" aria-label="Choose layers"></button>
        <select class="tsel w50" aria-label="From layer"><option>0</option></select><select class="tsel w50" aria-label="To layer"><option>0</option></select></div>
      <button class="ms-auto" aria-label="More toolbars"><svg width="14" height="24"><path d="M1 3l3 3-3 3M6 3l3 3-3 3" fill="none" stroke="#000" stroke-width="1.500"/><path d="M2 18h6l-3 3z"/></svg></button>
    </div>
  </div>
</header>

<main class="d-flex flex-fill" style="min-height:0;padding-top:5px">
  <!-- project tree -->
  <section class="pane left d-flex flex-column flex-shrink-0">
    <h2 class="pane-head d-flex align-items-center mb-0"><span class="flex-fill">Project</span><button aria-label="Pin"><svg class="i24"><use href="#pin"/></svg></button><button aria-label="Close"><svg class="i24"><use href="#shut"/></svg></button></h2>
    <ul class="tree">
      <li><div class="rowline"><svg class="i16 ms-1"><use href="#proj"/></svg><span class="lbl ms-0">Project</span></div>
      <ul>
        <li><div class="rowline"><i class="c t"><button aria-label="Collapse"></button></i><svg class="i16"><use href="#dev"/></svg><span class="lbl">Device_1(TP 270 10")</span></div>
        <ul>
          <li><div class="rowline"><i class="c v"></i><i class="c t"><button aria-label="Collapse"></button></i><svg class="i16"><use href="#o-scr"/></svg><span class="lbl">Screens</span></div>
          <ul>
            <li class="rowline"><i class="c v"></i><i class="c v"></i><i class="c t"></i><svg class="i16"><use href="#addscr"/></svg><span class="lbl">Add Screen</span></li>
            <li class="rowline"><i class="c v"></i><i class="c v"></i><i class="c t"></i><svg class="i16"><use href="#tmpl"/></svg><span class="lbl">Template</span></li>
            <li class="rowline"><i class="c v"></i><i class="c v"></i><i class="c e"></i><svg class="i16"><use href="#scr"/></svg><span class="lbl on">Screen_1</span></li>
          </ul></li>
          <li><div class="rowline"><i class="c v"></i><i class="c t"><button aria-label="Collapse"></button></i><svg class="i16"><use href="#o-com"/></svg><span class="lbl">Communication</span></div>
          <ul>
            <li class="rowline"><i class="c v"></i><i class="c v"></i><i class="c t"></i><svg class="i16"><use href="#tagi"/></svg><span class="lbl">Tags</span></li>
            <li class="rowline"><i class="c v"></i><i class="c v"></i><i class="c t"></i><svg class="i16"><use href="#conn"/></svg><span class="lbl">Connections</span></li>
            <li class="rowline"><i class="c v"></i><i class="c v"></i><i class="c e"></i><svg class="i16"><use href="#cyc"/></svg><span class="lbl">Cycles</span></li>
          </ul></li>
          <li><div class="rowline"><i class="c v"></i><i class="c t"><button aria-label="Collapse"></button></i><svg class="i16"><use href="#o-mail"/></svg><span class="lbl">Alarm Management</span></div>
          <ul>
            <li class="rowline"><i class="c v"></i><i class="c v"></i><i class="c t"></i><svg class="i16"><use href="#maila"/></svg><span class="lbl">Analog Alarms</span></li>
            <li class="rowline"><i class="c v"></i><i class="c v"></i><i class="c t"></i><svg class="i16"><use href="#maild"/></svg><span class="lbl">Discrete Alarms</span></li>
            <li class="rowline"><i class="c v"></i><i class="c v"></i><i class="c e"><button class="p" aria-label="Expand"></button></i><svg class="i16"><use href="#o-set"/></svg><span class="lbl">Settings</span></li>
          </ul></li>
          <li class="rowline"><i class="c v"></i><i class="c t"><button class="p" aria-label="Expand"></button></i><svg class="i16"><use href="#o-rec"/></svg><span class="lbl">Recipes</span></li>
          <li class="rowline"><i class="c v"></i><i class="c t"><button class="p" aria-label="Expand"></button></i><svg class="i16"><use href="#o-his"/></svg><span class="lbl">Historical Data</span></li>
          <li class="rowline"><i class="c v"></i><i class="c t"><button class="p" aria-label="Expand"></button></i><svg class="i16"><use href="#o-scp"/></svg><span class="lbl">Scripts</span></li>
          <li class="rowline"><i class="c v"></i><i class="c t"><button class="p" aria-label="Expand"></button></i><svg class="i16"><use href="#o-rep"/></svg><span class="lbl">Reports</span></li>
          <li class="rowline"><i class="c v"></i><i class="c t"><button class="p" aria-label="Expand"></button></i><svg class="i16"><use href="#o-txt"/></svg><span class="lbl">Text and Graphics Lists</span></li>
          <li class="rowline"><i class="c v"></i><i class="c t"><button class="p" aria-label="Expand"></button></i><svg class="i16"><use href="#o-usr"/></svg><span class="lbl">Runtime User Administration</span></li>
          <li class="rowline"><i class="c v"></i><i class="c e"><button class="p" aria-label="Expand"></button></i><svg class="i16"><use href="#o-dev"/></svg><span class="lbl">Device Settings</span></li>
        </ul></li>
        <li><div class="rowline"><i class="c t"><button aria-label="Collapse"></button></i><svg class="i16"><use href="#o-glb"/></svg><span class="lbl">Language Settings</span></div>
        <ul>
          <li class="rowline"><i class="c v"></i><i class="c t"></i><svg class="i16"><use href="#glb"/></svg><span class="lbl">Project Languages</span></li>
          <li class="rowline"><i class="c v"></i><i class="c t"></i><svg class="i16"><use href="#gfx"/></svg><span class="lbl">Graphics</span></li>
          <li class="rowline"><i class="c v"></i><i class="c t"></i><svg class="i16"><use href="#ptx"/></svg><span class="lbl">Project Texts</span></li>
          <li class="rowline"><i class="c v"></i><i class="c e"><button class="p" aria-label="Expand"></button></i><svg class="i16"><use href="#o-dic"/></svg><span class="lbl">Dictionaries</span></li>
        </ul></li>
        <li class="rowline"><i class="c t"><button class="p" aria-label="Expand"></button></i><svg class="i16"><use href="#o-str"/></svg><span class="lbl">Structures</span></li>
        <li class="rowline"><i class="c e"><button class="p" aria-label="Expand"></button></i><svg class="i16"><use href="#o-ver"/></svg><span class="lbl">Version Management</span></li>
      </ul></li>
    </ul>
  </section>

  <!-- screen editor and property view -->
  <div class="mid d-flex flex-column flex-fill">
    <div class="tabs d-flex align-items-end flex-shrink-0">
      <button class="tab on"><svg class="i16"><use href="#scr"/></svg>Screen_1</button>
      <button class="tab idle align-items-center"><svg class="i16"><use href="#tagi"/></svg><span class="pb-1">Tags</span></button>
      <div class="ms-auto d-flex align-self-center" style="gap:1px"><button aria-label="Previous"><svg width="22" height="22"><use href="#prev"/></svg></button><button aria-label="Next"><svg width="22" height="22"><use href="#next"/></svg></button><button aria-label="Close screen"><svg width="22" height="22"><use href="#shut"/></svg></button></div>
    </div>
    <div class="editor d-flex flex-column flex-fill">
      <div class="d-flex flex-fill" style="min-height:0">
        <div class="stage flex-fill">
          <div class="strip" style="left:93px;width:43px"></div>
          <svg style="left:136px;top:0" width="640" height="100%"><defs><pattern id="gp" width="8" height="8" patternUnits="userSpaceOnUse"><path d="M0 0h1v1H0z"/></pattern></defs><rect width="640" height="100%" fill="url(#gp)"/></svg>
          <div class="strip" style="left:776px;width:41px"></div>
          <div class="touch" style="left:822px;bottom:183px">TOUCH</div>
          <svg style="left:376px;top:40px" width="126" height="126" shape-rendering="crispEdges"><circle cx="63" cy="63" r="62" fill="#fff" stroke="#000"/></svg>
          <i class="knob k" style="left:376px;top:40px"></i><i class="knob" style="left:436px;top:40px"></i><i class="knob k" style="left:496px;top:40px"></i>
          <i class="knob" style="left:376px;top:100px"></i><i class="knob" style="left:496px;top:100px"></i>
          <i class="knob k" style="left:376px;top:160px"></i><i class="knob" style="left:436px;top:160px"></i><i class="knob k" style="left:496px;top:160px"></i>
          <button class="hmi" style="left:256px;top:233px">Start</button>
          <button class="hmi" style="left:464px;top:233px">Stop</button>
        </div>
        <div class="vbar d-flex flex-column flex-shrink-0">
          <svg class="chev mx-auto mt-1"><use href="#chu"/></svg><div style="flex:67"></div><div class="thumb" style="flex:125"></div><div style="flex:100"></div><svg class="chev mx-auto mb-1"><use href="#chd"/></svg>
        </div>
      </div>
      <div class="d-flex align-items-center border-top border-white flex-shrink-0" style="height:17px">
        <svg class="chev ms-1 me-1"><use href="#chl"/></svg><div class="thumb flex-fill align-self-stretch"></div><svg class="chev" style="margin-left:39px;margin-right:4px"><use href="#chr"/></svg>
        <svg class="i16 me-1" viewBox="0 0 16 16" style="margin-right:1px!important"><path d="M1 1h14v14H1z" fill="#ccc"/><path d="M8 2v12M2 8h12" stroke="#000" stroke-width="2"/><path d="M5 5l3-4 3 4zM5 11l3 4 3-4zM5 5L1 8l4 3zM11 5l4 3-4 3z"/></svg>
      </div>
    </div>

    <section class="pane props d-flex flex-column flex-shrink-0">
      <h2 class="pane-head d-flex align-items-center mb-0 flex-shrink-0"><span class="flex-fill">Circle_1 (Circle)</span><button aria-label="Pin"><svg class="i24"><use href="#pin"/></svg></button><button aria-label="Close"><svg class="i24"><use href="#shut"/></svg></button></h2>
      <div class="boxed prop-body d-flex flex-fill">
        <nav class="nav-tree boxed d-flex flex-column flex-shrink-0">
          <a href="#"><svg width="9" height="14" class="ms-1" style="margin-right:10px"><path d="M1 0v14l8-7z" fill="#0000a0"/></svg>Properties</a>
          <a href="#"><svg width="15" height="9" class="ms-1"><path d="M0 0h15L7.500 8z" fill="#0000a0"/></svg><span style="background:#f0f0f0;padding:0 12px 0 4px">Animations</span></a>
          <a href="#" style="font:bold 11px 'DejaVu Sans Condensed',sans-serif"><svg width="11" height="12" style="margin:0 7px 0 25px"><path d="M0 3h5V0l6 6-6 6V9H0z" fill="#0000a0"/></svg>Appearance</a>
          <a href="#"><i class="bul"></i>Diagonal Movement</a>
          <a href="#"><i class="bul"></i>Horizontal Movement</a>
          <a href="#"><i class="bul"></i>Vertical movement</a>
          <a href="#"><i class="bul"></i>Direct Movement</a>
          <a href="#"><i class="bul"></i>Visibility</a>
          <div class="mt-auto d-flex align-items-center" style="height:17px;background:#f0f0f0"><svg class="chev mx-1"><use href="#chl"/></svg><div class="thumb align-self-stretch" style="width:101px"></div><svg class="chev ms-auto me-1"><use href="#chr"/></svg></div>
        </nav>
        <form class="form boxed flex-fill d-flex flex-column px-2">
          <div class="d-flex align-items-center justify-content-between px-1" style="height:24px"><label class="d-flex align-items-center" style="gap:5px;margin-left:-2px"><input type="checkbox" class="check" checked>Enabled</label><h3 class="heading m-0">Appearance</h3></div>
          <div class="rule mx-1 flex-shrink-0"></div>
          <div class="d-flex flex-fill" style="gap:11px;padding:9px 4px 10px 2px">
            <div class="flex-shrink-0">
              <fieldset class="group" style="height:53px"><legend>Tag</legend><select class="pick d-block" style="width:148px;margin:7px 0 0 8px" aria-label="Tag"><option>Motor_1</option></select></fieldset>
              <fieldset class="group" style="height:92px;margin-top:9px"><legend>Type</legend>
                <div class="d-flex flex-column" style="padding:9px 0 0 9px;gap:6px">
                <label class="d-flex align-items-center gap-1"><input type="radio" name="type" class="check">Integer</label>
                <label class="d-flex align-items-center gap-1"><input type="radio" name="type" class="check">Binary</label>
                <div class="d-flex align-items-center justify-content-between" style="padding-right:7px;height:16px"><label class="d-flex align-items-center gap-1 mark-on" style="padding:2px 4px;margin-left:-4px"><input type="radio" name="type" class="check" checked>Bit</label>
                <div class="spin d-flex"><input type="number" class="num" value="0" aria-label="Bit number"><div><button type="button" class="up" aria-label="Up"></button><button type="button" class="down" aria-label="Down"></button></div></div></div>
                </div>
              </fieldset>
            </div>
            <div class="flex-fill">
            <table class="gridtab">
              <colgroup><col style="width:19px"><col style="width:81px"><col style="width:120px"><col style="width:120px"><col style="width:70px"><col></colgroup>
              <thead><tr><th></th><th><div class="d-flex justify-content-between align-items-center">Value<svg width="17" height="9"><path d="M0 9l8.500-9L17 9z" fill="#fff"/></svg></div></th><th>Foreground Color</th><th>Background Color</th><th>Flashing</th><th></th></tr></thead>
              <tbody>
                <tr class="w"><td><svg width="13" height="14" class="ms-1"><path d="M0 1.500h13M0 4.500h13M0 7.500h13M0 10.500h13M0 13.500h13" stroke="#000"/></svg></td>
                  <td><div class="mark-on" style="outline-offset:-1px"><select class="pick" aria-label="Value"><option>0</option></select></div></td>
                  <td><div class="position-relative"><select class="pick tint" aria-label="Foreground color"><option></option></select><i class="sw" style="background:#000030"></i></div></td>
                  <td><div class="position-relative"><select class="pick" aria-label="Background color"><option></option></select><i class="sw" style="background:#fff"></i></div></td>
                  <td><select class="pick" aria-label="Flashing"><option>No</option></select></td><td></td></tr>
                <tr class="w"><td></td><td></td><td></td><td></td><td></td><td></td></tr>
                <tr><td></td><td></td><td></td><td></td><td></td><td></td></tr>
                <tr><td></td><td></td><td></td><td></td><td></td><td></td></tr>
                <tr><td></td><td></td><td></td><td></td><td></td><td></td></tr>
                <tr><td></td><td></td><td></td><td></td><td></td><td></td></tr>
                <tr class="short"><td></td><td></td><td></td><td></td><td></td><td></td></tr>
              </tbody>
            </table>
            </div>
          </div>
        </form>
      </div>
    </section>
  </div>

  <!-- toolbox -->
  <aside class="pane right d-flex flex-column flex-shrink-0">
    <h2 class="pane-head d-flex align-items-center mb-0"><span class="flex-fill">Tools</span><button aria-label="Pin"><svg class="i24"><use href="#pin"/></svg></button><button aria-label="Close"><svg class="i24"><use href="#shut"/></svg></button></h2>
    <div class="d-flex align-items-center" style="height:24px;background:#f0f0f0"><i class="grip edge" style="height:18px"></i>
      <button class="tb" aria-label="Select"><svg class="i16" viewBox="0 0 16 16"><path d="M3 1v12l3-3 2 5 2-1-2-4h4z" fill="#8c8ca0"/></svg></button>
      <button class="tb" aria-label="Stamp"><svg class="i16" viewBox="0 0 16 16"><circle cx="8" cy="3.500" r="2.500" fill="#dcdcff" stroke="#8c8cd0"/><path d="M7 6h2v3h5l2 3H0l2-3h5z" fill="#a8a8e4"/><path d="M0 12h16v3H0z" fill="#8c8cd0"/></svg></button>
      <button class="tb" aria-label="Settings"><svg class="i16" viewBox="0 0 16 16"><path d="M2 14L10 5M14 14L5 4" stroke="#8c8cd0" stroke-width="2.500"/><path d="M0 4l4-3h4L6 4 4 7zM10 1h3l-2 3 2 1 2-2v4l-4 1-3-3z" fill="#8c8cd0"/></svg></button></div>
    <button class="acc current flex-shrink-0">Simple Objects</button>
    <div class="hatch d-flex justify-content-center flex-shrink-0"><svg fill="none" stroke="#bbb" stroke-width="2"><path d="M2 7l3.500-4L9 7"/></svg></div>
    <div class="objs flex-fill">
      <button><svg class="i16" viewBox="0 0 16 16"><path d="M0 12L16 4" stroke="#14146e"/></svg>Line</button>
      <button><svg class="i16" viewBox="0 0 16 16"><path d="M0 8l12-6-3 4 5 8H0" fill="none" stroke="#14146e" stroke-width="1.200"/></svg>Polyline</button>
      <button><svg class="i16" viewBox="0 0 16 16"><path d="M1 14V7l11-5-2 5 4 7z" fill="#c0c0ff" stroke="#14146e"/></svg>Polygon</button>
      <button><svg class="i16" viewBox="0 0 16 16"><ellipse cx="8" cy="8" rx="7.500" ry="5.500" fill="#c0c0ff" stroke="#14146e"/></svg>Ellipse</button>
      <button><svg class="i16" viewBox="0 0 16 16"><circle cx="8" cy="8" r="6.500" fill="#c0c0ff" stroke="#14146e"/></svg>Circle</button>
      <button><svg class="i16" viewBox="0 0 16 16"><path d="M1.500 3.500h13v9h-13z" fill="#c0c0ff" stroke="#14146e"/></svg>Rectangle</button>
      <button><svg class="i16" viewBox="0 0 16 16"><path d="M3 14L7.500 2.500 12 14M4.500 10h6" fill="none" stroke="#14146e" stroke-width="1.700"/></svg>Text Field</button>
      <button><svg class="i16" viewBox="0 0 16 16"><path d="M.5 3.500h15v10H.5z" fill="#fff" stroke="#8080ff"/><text x="2" y="11">ab</text><path d="M12 5h1q1 0 1 1v5q0 1-1 1h-1" fill="none" stroke="#14146e"/></svg>IO Field</button>
      <button><svg class="i16" viewBox="0 0 16 16"><path d="M6 3h10v13H6z" fill="#c0c0ff"/><path d="M7 3h9v3H7z" fill="#8080ff"/><circle cx="4" cy="4" r="3.500" fill="#fff" stroke="#5050b8"/><path d="M4 2v2h2" fill="none" stroke="#14146e"/><text x="7" y="14">12</text></svg>Date-Time Field</button>
      <button><svg class="i16" viewBox="0 0 16 16"><path d="M1.500 1.500h13v13h-13z" fill="#fff" stroke="#8080ff"/><path d="M3 10l3-7 2 7M4 8h4" fill="none" stroke="#14146e"/><circle cx="10" cy="10" r="3" fill="none" stroke="#14146e"/></svg>Graphic IO Field</button>
      <button><svg class="i16" viewBox="0 0 16 16"><path d="M.5 2.500h15v11H.5z" fill="#fff" stroke="#8080ff"/><path d="M7 6h7l-3.500 4z" fill="#14146e"/></svg>Symbolic IO Field</button>
      <button><svg class="i16" viewBox="0 0 16 16"><path d="M.5 1.500h15v13H.5z" fill="#c0c0ff" stroke="#14146e"/><path d="M0 9l4-3 3 4 4-3 2 2 3-2v8H0z" fill="#14146e"/></svg>Graphics View</button>
      <button><svg class="i16" viewBox="0 0 16 16"><path d="M0 3h16v10H0z" fill="#8080ff"/><path d="M0 12.500h15.500V3" fill="none" stroke="#14146e"/><text x="2" y="11">OK</text></svg>Button</button>
      <button><svg class="i16" viewBox="0 0 16 16"><path d="M0 1h7v14H0z" fill="#8080ff"/><path d="M8 1h7v14H8z" fill="#c0c0ff"/><path d="M0 14.500h7M8 1.500h7" stroke="#14146e" stroke-width="2"/><circle cx="3.500" cy="8" r="2" fill="none" stroke="#14146e"/><path d="M11.500 6v4" stroke="#14146e"/></svg>Switch</button>
      <button><svg class="i16" viewBox="0 0 16 16"><path d="M4.500.5h7v15h-7z" fill="#c0c0ff" stroke="#14146e"/><path d="M7 8h4v7H7z" fill="#8080ff"/><path d="M5 3h2M5 5h2M5 7h2M5 9h2M5 11h2M5 13h2" stroke="#14146e"/></svg>Bar</button>
    </div>
    <div class="hatch rev d-flex justify-content-center flex-shrink-0"><svg fill="none" stroke="#bbb" stroke-width="2"><path d="M2 1l3.500 4L9 1"/></svg></div>
    <div class="flex-shrink-0" style="border-top:1px solid #000;margin:2px 2px 1px 0"><button class="acc w-100">Enhanced Objects</button><button class="acc w-100">Graphics</button><button class="acc w-100">Library</button></div>
    <div class="bin d-flex align-items-center flex-shrink-0"><svg width="23" height="36" viewBox="0 0 23 36" style="margin:26px 18px 0 5px"><path d="M1 7V3q1-3 5-3h11q4 0 5 3v4z" fill="url(#binfill)"/><path d="M2 8h19v27H2z" fill="url(#binfill)"/><path d="M1 6.500h21M2 35.500h19" stroke="#2a2a50"/></svg><span class="text-nowrap">Drop any object here to delete it.</span></div>
  </aside>
</main>

<footer class="status d-flex align-items-center flex-shrink-0"><svg class="i16" viewBox="0 0 16 16" style="margin:0 5px 0 2px"><path d="M5 1l3-1 3 1v5L8 7 5 6z" fill="#9c9cff"/><path d="M0 9l4-2 3 2v5l-3 2-4-2z" fill="#6a6af0"/><path d="M8 10l4-2 4 2v4l-4 2-4-2z" fill="#dcdcff"/><path d="M4 11v5l3-2V9zM12 12v4l4-2v-4zM8 3v4l3-1V1z" fill="#2c2cb0"/></svg>Object:</footer>

<script src="https://cdn.jsdelivr.net/npm/bootstrap@5.3.0/dist/js/bootstrap.bundle.min.js"></script>
</body>
</html>
